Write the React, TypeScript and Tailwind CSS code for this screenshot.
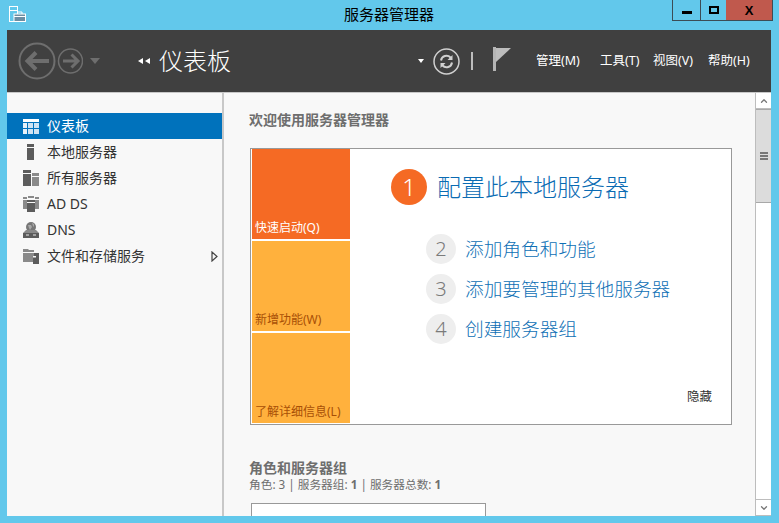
import { ChevronUp, ChevronDown } from 'lucide-react'

const FONT = "font-['Noto_Sans','Noto_Sans_CJK_SC',sans-serif]"

function BackIcon() {
  return (
    <svg width="65" height="40" viewBox="0 0 65 40" fill="none" stroke="#6e6e6e">
      <circle cx="19" cy="20" r="17.5" strokeWidth="2" />
      <path d="M9 20h22M18 11.500 9.500 20l8.500 8.500" strokeWidth="4" />
      <circle cx="52.500" cy="20" r="12" strokeWidth="1.500" />
      <path d="M45 20h15M53.500 13.500 60 20l-6.500 6.500" strokeWidth="3" />
    </svg>
  )
}

function NavIcon({ name }: { name: string }) {
  const fill = name === 'dashboard' ? '#ffffff' : '#5c5c5c'
  if (name === 'dashboard') {
    return (
      <svg width="16" height="15" viewBox="0 0 16 15">
        <rect y="0" width="16" height="3" fill={fill} />
        <rect y="4" width="4" height="5" fill={fill} opacity=".9" />
        <rect y="10" width="4" height="5" fill={fill} opacity=".9" />
        <rect x="5" y="4" width="5" height="5" fill="#cfe3f3" />
        <rect x="11" y="4" width="5" height="5" fill="#cfe3f3" />
        <rect x="5" y="10" width="5" height="5" fill="#cfe3f3" />
        <rect x="11" y="10" width="5" height="5" fill="#cfe3f3" />
      </svg>
    )
  }
  if (name === 'server') {
    return (
      <svg width="16" height="16" viewBox="0 0 16 16">
        <rect x="4" y="0" width="7" height="3" fill={fill} />
        <rect x="4" y="4" width="7" height="12" fill={fill} />
      </svg>
    )
  }
  if (name === 'all') {
    return (
      <svg width="16" height="16" viewBox="0 0 16 16">
        <rect x="0" y="0" width="8" height="3" fill={fill} />
        <rect x="0" y="4" width="8" height="12" fill={fill} />
        <rect x="9" y="3" width="7" height="3" fill="#8a8a8a" />
        <rect x="9" y="7" width="7" height="9" fill="#8a8a8a" />
      </svg>
    )
  }
  if (name === 'adds') {
    return (
      <svg width="16" height="16" viewBox="0 0 16 16">
        <rect x="0" y="1" width="4" height="2" fill="#8a8a8a" />
        <rect x="0" y="4" width="4" height="9" fill="#8a8a8a" />
        <rect x="12" y="1" width="4" height="2" fill="#8a8a8a" />
        <rect x="12" y="4" width="4" height="9" fill="#8a8a8a" />
        <rect x="5" y="0" width="6" height="2" fill="#8a8a8a" />
        <rect x="4" y="4" width="8" height="2" fill={fill} />
        <rect x="4" y="7" width="8" height="9" fill={fill} />
      </svg>
    )
  }
  if (name === 'dns') {
    return (
      <svg width="16" height="16" viewBox="0 0 16 16">
        <circle cx="8" cy="5" r="5" fill="#777777" />
        <path d="M5 3h3l1 2-2 3-1-2zM9 1l2 1v3l-1-1z" fill="#a8a8a8" />
        <path d="M3 8h10l3 3H0z" fill="#8a8a8a" />
        <rect x="0" y="11" width="16" height="5" fill={fill} />
        <rect x="3" y="12.500" width="3" height="1" fill="#e8e8e8" />
        <rect x="10" y="12.500" width="3" height="1" fill="#e8e8e8" />
      </svg>
    )
  }
  return (
    <svg width="16" height="16" viewBox="0 0 16 16">
      <path d="M0 1h5l1 1h5v2H0z" fill="#8a8a8a" />
      <rect x="0" y="5" width="11" height="9" fill="#8a8a8a" />
      <path d="M11 5h5v11h-6V9h1z" fill={fill} />
      <rect x="10" y="8" width="3" height="1.500" fill="#f8f8f8" />
    </svg>
  )
}

const navItems = [
  { icon: 'dashboard', label: '仪表板', active: true },
  { icon: 'server', label: '本地服务器' },
  { icon: 'all', label: '所有服务器' },
  { icon: 'adds', label: 'AD DS' },
  { icon: 'dns', label: 'DNS' },
  { icon: 'files', label: '文件和存储服务', arrow: true },
]

const steps = [
  { n: 2, label: '添加角色和功能' },
  { n: 3, label: '添加要管理的其他服务器' },
  { n: 4, label: '创建服务器组' },
]

const menus = [
  { label: '管理(M)', w: 'w-[64px]' },
  { label: '工具(T)', w: 'w-[53px]' },
  { label: '视图(V)', w: 'w-[55px]' },
  { label: '帮助(H)', w: 'w-[56px]' },
]

export default function App() {
  return (
    <div className={`w-[779px] h-[523px] overflow-hidden bg-[#62c8eb] flex flex-col ${FONT}`}>
      {/* Title bar */}
      <div className="h-[29px] shrink-0 flex items-start relative">
        <svg className="ml-[9px] mt-[6px]" width="17" height="16" viewBox="0 0 17 16">
          <rect x="0.500" y="0.500" width="8" height="15" fill="#62c8eb" stroke="#fff" />
          <rect x="1" y="4" width="7" height="1" fill="#fff" />
          <rect x="5" y="8" width="11.500" height="7.500" fill="#6c8ea3" stroke="#fff" />
          <path d="M8.500 8V6h4.500v2" fill="none" stroke="#fff" />
          <rect x="5" y="10" width="11" height="1" fill="#fff" />
        </svg>
        <div className="absolute left-0 top-[4px] w-[778px] text-center text-[15px] leading-[20px] text-black">服务器管理器</div>
        <div className="ml-auto mr-[6px] flex h-[21px] border border-t-0 border-[#3c4c55] relative">
          <div className="w-[28px] flex items-center justify-center border-r border-[#3c4c55]">
            <div className="w-[10px] h-[3px] bg-black mt-[4px]" />
          </div>
          <div className="w-[25px] flex items-center justify-center">
            <div className="w-[10px] h-[8px] border-2 border-black" />
          </div>
          <div className="w-[46px] bg-[#c0594d] flex items-center justify-center text-[13px] font-bold leading-none text-black font-['Liberation_Sans',sans-serif]">X</div>
        </div>
      </div>

      {/* Toolbar */}
      <div className="ml-[7px] mr-[8px] mt-px h-[63px] shrink-0 bg-[#404040] flex items-center border-b border-[#c8c8c8]">
        <div className="ml-[11px]"><BackIcon /></div>
        <div className="ml-[7px] w-0 h-0 border-x-[5px] border-x-transparent border-t-[6px] border-t-[#6e6e6e]" />
        <div className="ml-[38px] flex gap-[2px] items-center">
          <div className="w-0 h-0 border-y-[3.500px] border-y-transparent border-r-[5px] border-r-white" />
          <div className="w-0 h-0 border-y-[3.500px] border-y-transparent border-r-[5px] border-r-white" />
        </div>
        <div className="ml-[9px] text-[24px] leading-[32px] text-white font-light">仪表板</div>

        <div className="ml-auto flex items-center">
          <div className="w-0 h-0 border-x-[3.500px] border-x-transparent border-t-[4px] border-t-white" />
          <svg className="ml-[9px]" width="27" height="27" viewBox="0 0 27 27" fill="none" stroke="#d0d0d0">
            <circle cx="13.500" cy="13.500" r="12.500" strokeWidth="1.500" />
            <path d="M8 12.500a5.500 5.500 0 0 1 9.500-3l1 1M19 14.500a5.500 5.500 0 0 1-9.500 3l-1-1" strokeWidth="2" />
            <path d="M19.500 7v5h-5zM7.500 20v-5h5z" fill="#d0d0d0" stroke="none" />
          </svg>
          <div className="ml-[11px] w-[2px] h-[18px] bg-[#bdbdbd]" />
          <svg className="ml-[20px] mt-[-4px]" width="18" height="24" viewBox="0 0 18 24">
            <rect x="0" y="0" width="3" height="24" fill="#b5b5b5" />
            <path d="M3 1h15L3 15z" fill="#bdbdbd" />
          </svg>
          <div className="ml-[25px] mr-[7px] flex text-[12.5px] leading-[16px] text-white">
            {menus.map((m) => (
              <div key={m.label} className={m.w}>{m.label}</div>
            ))}
          </div>
        </div>
      </div>

      {/* Body */}
      <div className="ml-[7px] mr-[8px] h-[423px] shrink-0 bg-[#f8f8f8] flex overflow-hidden">
        {/* Left nav */}
        <div className="w-[215px] shrink-0 pt-[20px]">
          {navItems.map((item) => (
            <div
              key={item.label}
              className={
                item.active
                  ? 'h-[26px] flex items-center bg-[#0072bc] text-white text-[14px]'
                  : 'h-[26px] flex items-center text-[#333333] text-[14px]'
              }
            >
              <div className="ml-[16px] w-[16px] flex justify-center"><NavIcon name={item.icon} /></div>
              <span className="ml-[8px] mb-[2px]">{item.label}</span>
              {item.arrow && (
                <svg className="ml-auto mr-[4px]" width="7" height="11" viewBox="0 0 7 11">
                  <path d="M1 1v9l5-4.500z" fill="#f8f8f8" stroke="#444444" strokeWidth="1.200" />
                </svg>
              )}
            </div>
          ))}
        </div>
        <div className="w-[2px] shrink-0 bg-[#c8c8c8]" />

        {/* Main */}
        <div className="w-[531px] shrink-0 pl-[25px]">
          <div className="mt-[17px] text-[14px] leading-[20px] font-bold text-[#6e6e6e]">欢迎使用服务器管理器</div>
          <div className="mt-[18px] ml-px w-[482px] h-[277px] bg-white border border-[#999999] flex px-px">
            <div className="w-[98px] shrink-0 flex flex-col gap-[2px] text-[12px] leading-[16px]">
              <div className="h-[90px] bg-[#f56a24] text-white flex items-end px-[3px] pb-[3px]">快速启动(Q)</div>
              <div className="h-[90px] bg-[#ffb13d] text-[#a84f06] flex items-end px-[3px] pb-[3px]">新增功能(W)</div>
              <div className="h-[90px] bg-[#ffb13d] text-[#a84f06] flex items-end px-[3px] pb-[3px]">了解详细信息(L)</div>
            </div>
            <div className="flex-1 relative pl-[41px] pt-[20px]">
              <div className="flex items-center">
                <div className="w-[36px] h-[36px] rounded-full bg-[#f56a24] text-white flex items-center justify-center text-[24px] font-light">1</div>
                <div className="ml-[10px] text-[24px] leading-[32px] text-[#0a6bb3] font-light">配置此本地服务器</div>
              </div>
              <div className="mt-[28px] ml-[35px] flex flex-col gap-[8px]">
                {steps.map((s) => (
                  <div key={s.n} className="flex items-center h-[32px]">
                    <div className="w-[30px] h-[30px] rounded-full bg-[#eeeeee] text-[#7a7a7a] flex items-center justify-center text-[20px] font-light">{s.n}</div>
                    <div className="ml-[9px] text-[18.67px] leading-[24px] text-[#0e6fb5] font-light">{s.label}</div>
                  </div>
                ))}
              </div>
              <div className="absolute right-[18px] bottom-[19px] text-[12.5px] leading-[16px] text-[#333333]">隐藏</div>
            </div>
          </div>
          <div className="mt-[35px] text-[14px] leading-[16px] font-bold text-[#6e6e6e]">角色和服务器组</div>
          <div className="text-[11.7px] leading-[16px] text-[#6e6e6e]">
            角色: 3 | 服务器组: <span className="font-bold">1</span> | 服务器总数: <span className="font-bold">1</span>
          </div>
          <div className="mt-[11px] ml-[2px] w-[235px] h-[20px] bg-white border border-[#999999]" />
        </div>

        {/* Scrollbar */}
        <div className="w-[17px] shrink-0 bg-white border-x border-b border-[#bdbdbd] flex flex-col">
          <div className="h-[16px] flex items-center justify-center border-b border-[#bdbdbd]">
            <ChevronUp className="w-[10px] h-[10px] text-[#777777]" strokeWidth={3} />
          </div>
          <div className="h-[94px] bg-[#dcdcdc] border-y border-[#a8a8a8] flex flex-col items-center justify-center gap-px">
            <div className="w-[8px] h-[2px] bg-[#777777]" />
            <div className="w-[8px] h-[2px] bg-[#777777]" />
            <div className="w-[8px] h-[2px] bg-[#777777]" />
          </div>
          <div className="flex-1" />
          <div className="h-[16px] flex items-center justify-center border-t border-[#bdbdbd]">
            <ChevronDown className="w-[10px] h-[10px] text-[#777777]" strokeWidth={3} />
          </div>
        </div>
      </div>
    </div>
  )
}
